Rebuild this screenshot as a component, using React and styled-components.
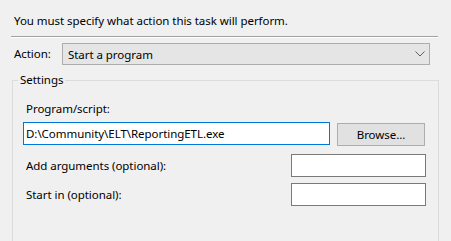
import React from "react";
import styled, { createGlobalStyle } from "styled-components";

const Global = createGlobalStyle`
  html, body { margin: 0; padding: 0; background: #f0f0f0; }
  body { font-family: "Noto Sans", "Open Sans", sans-serif; font-size: 11.5px; letter-spacing: -0.05px; color: #000; }
`;

const Page = styled.div`
  width: 451px;
  height: 241px;
  overflow: hidden;
  background: #f0f0f0;
`;

const Intro = styled.div`
  padding: 13px 0 0 14px;
  line-height: 16px;
  height: 16px;
`;

const Separator = styled.div`
  margin: 7px 0 0 11px;
  width: 427px;
  height: 1px;
  background: #a0a0a0;
  border-bottom: 1px solid #ffffff;
`;

const ActionRow = styled.div`
  display: flex;
  align-items: center;
  margin-top: 5px;
  padding-left: 14px;
  height: 22px;
`;

const ActionLabel = styled.span`
  width: 48px;
  line-height: 16px;
`;

const Select = styled.div`
  width: 368px;
  height: 22px;
  box-sizing: border-box;
  background: #e5e5e5;
  border: 1px solid #adadad;
  display: flex;
  align-items: center;
  justify-content: space-between;
  padding: 0 4px 0 5px;
`;

const Group = styled.fieldset`
  margin: 8px 0 0 12px;
  width: 427px;
  box-sizing: border-box;
  height: 200px;
  padding: 0;
  border: 1px solid #dcdcdc;
  border-bottom: none;
`;

const Legend = styled.legend`
  margin-left: 5px;
  padding: 0 2px;
  line-height: 14px;
`;

const Inner = styled.div`
  padding: 14px 12px 0 10px;
`;

const FieldLabel = styled.div`
  padding-left: 3px;
  line-height: 16px;
`;

const ProgramRow = styled.div`
  display: flex;
  align-items: flex-start;
  gap: 7px;
  margin-top: 5px;
`;

const TextBox = styled.div`
  box-sizing: border-box;
  width: ${(p) => p.$w}px;
  height: 23px;
  background: #ffffff;
  border: 1px solid ${(p) => (p.$focused ? "#0078d7" : "#7a7a7a")};
  padding: 0 2px;
  line-height: 21px;
  white-space: nowrap;
  overflow: hidden;
`;

const Button = styled.div`
  box-sizing: border-box;
  width: 88px;
  height: 23px;
  margin-top: 1px;
  background: #e1e1e1;
  border: 1px solid #adadad;
  display: flex;
  align-items: center;
  justify-content: center;
`;

const OptRow = styled.div`
  display: flex;
  align-items: center;
  justify-content: space-between;
  margin-top: ${(p) => p.$mt}px;
`;

const Chevron = () => (
  <svg width="10" height="6" viewBox="0 0 10 6">
    <path d="M0.5 0.5 L5 5 L9.5 0.5" fill="none" stroke="#606060" strokeWidth="1" />
  </svg>
);

export default function App() {
  return (
    <Page>
      <Global />
      <Intro>You must specify what action this task will perform.</Intro>
      <Separator />
      <ActionRow>
        <ActionLabel>Action:</ActionLabel>
        <Select>
          <span>Start a program</span>
          <Chevron />
        </Select>
      </ActionRow>
      <Group>
        <Legend>Settings</Legend>
        <Inner>
          <FieldLabel>Program/script:</FieldLabel>
          <ProgramRow>
            <TextBox $w={307} $focused>D:\Community\ELT\ReportingETL.exe</TextBox>
            <Button>Browse...</Button>
          </ProgramRow>
          <OptRow $mt={8}>
            <FieldLabel>Add arguments (optional):</FieldLabel>
            <TextBox $w={135} />
          </OptRow>
          <OptRow $mt={6}>
            <FieldLabel>Start in (optional):</FieldLabel>
            <TextBox $w={135} />
          </OptRow>
        </Inner>
      </Group>
    </Page>
  );
}
